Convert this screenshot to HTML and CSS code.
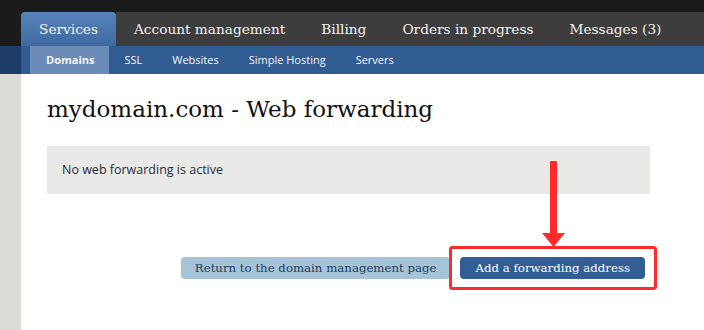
FILE: index.html
```html
<!DOCTYPE html>
<html>
<head>
    <title>Web forwarding</title>
    <link rel="stylesheet" href="styles.css">
</head>
<body>
    <div class="top"></div>
    <!-- main menu -->
    <div class="nav">
        <div class="side"></div>
        <a class="tab active">Services</a>
        <div class="rest">
            <a class="tab">Account management</a>
            <a class="tab">Billing</a>
            <a class="tab">Orders in progress</a>
            <a class="tab">Messages (3)</a>
        </div>
    </div>
    <div class="subnav">
        <div class="side navy"></div>
        <div class="subtabs">
            <a class="sub on">Domains</a>
            <a class="sub">SSL</a>
            <a class="sub">Websites</a>
            <a class="sub">Simple Hosting</a>
            <a class="sub">Servers</a>
        </div>
    </div>
    <div class="page">
        <div class="side grey"></div>
        <div class="content">
            <h1 class="title">mydomain.com - Web forwarding</h1>
            <div class="info">No web forwarding is active</div>
            <div class="actions">
                <button class="btn light">Return to the domain management page</button>
                <button class="btn dark">Add a forwarding address</button>
            </div>
        </div>
    </div>
    <!-- annotation -->
    <svg class="mark" width="704" height="330" viewBox="0 0 704 330">
        <rect x="450.5" y="247.5" width="205" height="41" rx="2" fill="none" stroke="#ff2b2b" stroke-width="3"/>
        <rect x="550" y="161" width="7" height="74" fill="#ff2b2b"/>
        <polygon points="542,233 565,233 553.5,247" fill="#ff2b2b"/>
    </svg>
</body>
</html>
```

FILE: styles.css
```css
body {
    margin: 0;
    background-color: #1b1b1b;
    position: relative;
    height: 330px;
    overflow: hidden;
}
.top {
    height: 12px;
}
.side {
    width: 21px;
    flex: none;
}
.navy {
    background-color: #1d3c69;
}
.grey {
    background-color: #dcdcd7;
}
.nav {
    display: flex;
    height: 34px;
}
.rest {
    flex: 1;
    display: flex;
    background-color: #3d3d3d;
}
.tab {
    padding: 0 18px;
    line-height: 34px;
    font-family: "DejaVu Serif", serif;
    font-size: 13.7px;
    color: #f2f2f2;
    white-space: nowrap;
}
.tab.active {
    background: linear-gradient(#5883bb, #3d68a0);
    border-radius: 4px 4px 0 0;
}
.subnav {
    display: flex;
    height: 28px;
}
.subtabs {
    flex: 1;
    display: flex;
    background-color: #305c92;
    padding-left: 9px;
}
.sub {
    padding: 0 15px;
    line-height: 28px;
    font-family: "Open Sans", sans-serif;
    font-size: 11px;
    color: #f4f6fa;
}
.sub.on {
    background-color: #6b8cb6;
    font-weight: bold;
    padding: 0 15px 0 16px;
}
.page {
    display: flex;
    height: 256px;
}
.content {
    flex: 1;
    background-color: #fff;
    padding: 20px 0 0 26px;
}
.title {
    margin: 0 0 22px 0;
    font-family: "DejaVu Serif", serif;
    font-weight: normal;
    font-size: 23px;
    line-height: 30px;
    color: #111;
}
.info {
    width: 588px;
    height: 48px;
    line-height: 48px;
    padding-left: 15px;
    background-color: #e9e9e7;
    font-family: "Open Sans", sans-serif;
    font-size: 12.5px;
    color: #2a2a3a;
}
.actions {
    width: 598px;
    display: flex;
    justify-content: flex-end;
    gap: 10px;
    margin-top: 63px;
}
.btn {
    height: 22px;
    border: none;
    border-radius: 4px;
    font-family: "DejaVu Serif", serif;
    font-size: 11.75px;
    padding: 0 14px;
    cursor: pointer;
}
.light {
    background-color: #a6c4d8;
    color: #243d5e;
}
.dark {
    background-color: #325e95;
    color: #fff;
    padding: 0 15px;
}
.mark {
    position: absolute;
    left: 0;
    top: 0;
}
```
